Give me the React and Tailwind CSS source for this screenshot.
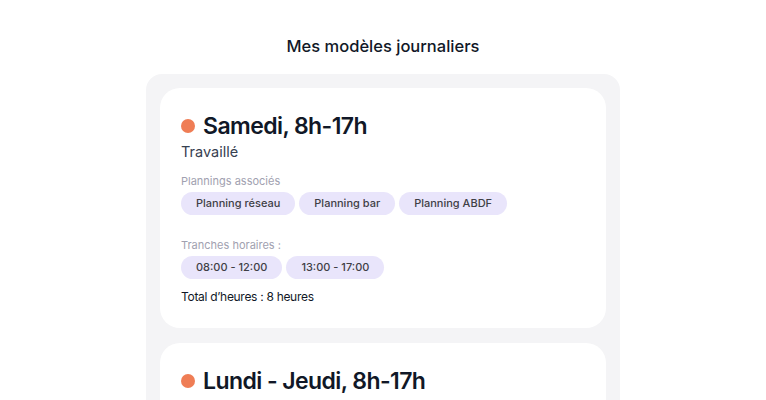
const plannings = ["Planning réseau", "Planning bar", "Planning ABDF"];
const tranches = ["08:00 - 12:00", "13:00 - 17:00"];

function Pill({ children }) {
  return (
    <span className="h-[23px] px-[15px] flex items-center rounded-full bg-[#e9e5fb] text-[11px] font-medium text-[#3f3f46]">
      {children}
    </span>
  );
}

function DayCard({ title, status, showDetails }) {
  return (
    <div className="bg-white rounded-[20px] px-[21px] pt-[23px] pb-[23px]">
      <div className="flex items-center gap-2">
        <span className="w-[14px] h-[14px] rounded-full bg-[#ef7d55]" />
        <h2 className="text-[23px] leading-[30px] font-semibold tracking-tight text-[#111827]">{title}</h2>
      </div>
      <p className="mt-[1px] text-[14.5px] leading-5 text-[#374151]">{status}</p>
      {showDetails && (
        <>
          <p className="mt-[11px] text-[11px] leading-4 text-[#a1a1b0]">Plannings associés</p>
          <div className="mt-[3px] flex gap-1">
            {plannings.map((p) => (
              <Pill key={p}>{p}</Pill>
            ))}
          </div>
          <p className="mt-[22px] text-[11px] leading-4 text-[#a1a1b0]">Tranches horaires :</p>
          <div className="mt-[3px] flex gap-1">
            {tranches.map((t) => (
              <Pill key={t}>{t}</Pill>
            ))}
          </div>
          <p className="mt-[10px] text-[12px] leading-4 tracking-tight text-[#111827]">Total d’heures : 8 heures</p>
        </>
      )}
    </div>
  );
}

export default function App() {
  return (
    <div className="h-[400px] overflow-hidden bg-white font-['Inter',sans-serif] flex flex-col items-center">
      <h1 className="mt-[34px] text-[16.5px] leading-6 font-medium text-[#111827]">Mes modèles journaliers</h1>
      <div className="mt-[16px] w-[474px] bg-[#f4f4f6] rounded-[16px] p-[14px] flex flex-col gap-[15px]">
        <DayCard title="Samedi, 8h-17h" status="Travaillé" showDetails />
        <DayCard title="Lundi - Jeudi, 8h-17h" status="Travaillé" showDetails />
      </div>
    </div>
  );
}
